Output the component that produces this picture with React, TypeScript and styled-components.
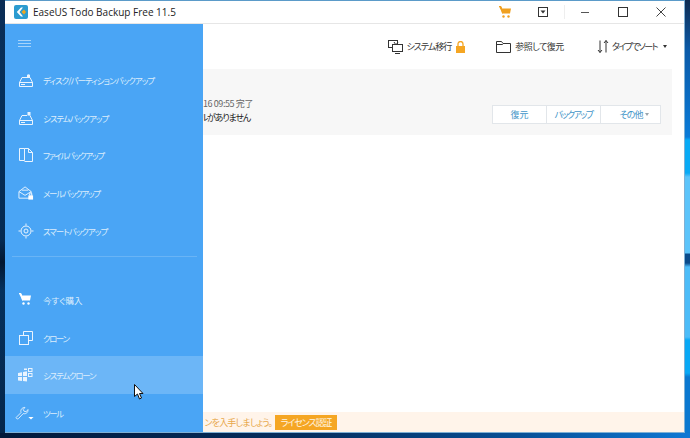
import React from "react";
import styled, { createGlobalStyle } from "styled-components";

const Global = createGlobalStyle`
  html, body { margin: 0; padding: 0; width: 690px; height: 438px; overflow: hidden; }
  * { box-sizing: border-box; }
`;
const FONT = `"Noto Sans CJK JP", "Noto Sans", sans-serif`;

const Desktop = styled.div`
  position: relative; width: 690px; height: 438px; overflow: hidden;
  padding: 0 5px 5px 5px;
  font-family: ${FONT}; font-feature-settings: "palt" 1;
  background:
    linear-gradient(180deg, #0f2c52 0, #0b5aa8 50px, #0a7bd8 137px, #08aaf5 140px, #08aaf5 173px,
      #5cc4fa 177px, #5cc4fa 253px, #0a4a8a 254px, #0a4a8a 263px, #4cbcf8 267px, #4cbcf8 337px,
      #08a8f5 340px, #08a8f5 373px, #0a78d0 377px, #0a78d0 100%) right top / 5px 433px no-repeat,
    linear-gradient(180deg, #0a2c55 0, #05305c 90px, #052a52 240px, #021630 262px, #05305c 290px, #04264c 433px) left top / 5px 433px no-repeat,
    linear-gradient(90deg, #02183a 0%, #052f60 45%, #074f96 75%, #0f78d4 100%);
`;
const Window = styled.div`
  width: 680px; height: 433px; display: flex; flex-direction: column;
  background: #fff; border-top: 1px solid #5b9bc9; border-right: 1px solid #7fb0d4; border-bottom: 1px solid #7fb0d4;
`;
const TitleBar = styled.header`
  flex: 0 0 22px; display: flex; align-items: center; padding: 0 4px 0 9px; background: #fff;
`;
const AppTitle = styled.span`
  margin-left: 5px; font: 10px/1 "Open Sans", sans-serif; color: #222; white-space: nowrap;
`;
const TitleTools = styled.div`
  margin-left: auto; display: flex; align-items: center; height: 100%;
`;
const TitleButton = styled.div`
  width: 38px; display: flex; align-items: center; justify-content: center;
`;
const ToolDivider = styled.i`
  width: 1px; height: 14px; background: #eee; margin: 0 1px 0 2px;
`;
const Body = styled.div`
  position: relative; flex: 1; display: flex; min-height: 0; border-top: 1px solid #e6e6e6;
`;
const Sidebar = styled.nav`
  flex: 0 0 198px; display: flex; flex-direction: column; background: #4aa5f5;
`;
const Burger = styled.div`
  height: 37px; display: flex; align-items: center; padding-left: 13px;
`;
const Row = styled.div<{ $active?: boolean; $track: number }>`
  height: 37.8px; display: flex; align-items: center; padding-left: 13px; gap: 9px;
  color: #dcedfc; font-size: 8.5px; white-space: nowrap; letter-spacing: ${p => p.$track}px;
  background: ${p => (p.$active ? "#6cb6f7" : "transparent")};
`;
const RowIcon = styled.span`
  width: 16px; height: 16px; display: flex; flex: none;
`;
const Rule = styled.hr`
  margin: 6px 6px 0 7px; border: 0; height: 1px; background: #69b4f6;
`;
const BottomGroup = styled.div`
  margin-top: auto; display: flex; flex-direction: column;
`;
const Main = styled.main`
  flex: 1; min-width: 0; display: flex; flex-direction: column;
`;
const Toolbar = styled.div`
  flex: 0 0 45px; display: flex; align-items: center; justify-content: flex-end; padding-right: 17px; gap: 30px;
`;
const ToolItem = styled.div<{ $lead?: number }>`
  display: flex; align-items: center; gap: 3px; color: #333; white-space: nowrap;
  margin-left: ${p => p.$lead ?? 0}px;
`;
const ToolLabel = styled.span<{ $track: number }>`
  font-size: 9px; letter-spacing: ${p => p.$track}px;
`;
const Card = styled.section`
  margin-right: 12px; height: 66px; background: #f7f7f7; display: flex; align-items: flex-end; padding: 0 11px 11px 0;
`;
const Lines = styled.div`
  width: 50px; overflow: hidden; display: flex; flex-direction: column; align-items: flex-end; gap: 1px; margin-right: auto;
`;
const LineGrey = styled.div`
  font-size: 9px; line-height: 13px; color: #666; white-space: nowrap; letter-spacing: -0.4px;
`;
const LineDark = styled.div`
  font-size: 9px; line-height: 13px; color: #222; white-space: nowrap; letter-spacing: -1.2px; margin-right: 3px;
`;
const ButtonGroup = styled.div`
  display: flex; height: 19px; border: 1px solid #e2e6ea; background: #fff;
`;
const GroupButton = styled.div<{ $w: number; $track: number; $pad?: number }>`
  width: ${p => p.$w}px; display: flex; align-items: center; justify-content: center; gap: 3px;
  padding-left: ${p => p.$pad ?? 0}px;
  font-size: 9px; color: #3f95c8; white-space: nowrap; letter-spacing: ${p => p.$track}px;
  & + & { border-left: 1px solid #e2e6ea; }
`;
const Caret = styled.i<{ $c: string }>`
  width: 0; height: 0; border-left: 2.5px solid transparent; border-right: 2.5px solid transparent;
  border-top: 3px solid ${p => p.$c}; display: block;
`;
const Notice = styled.div`
  margin-top: auto; height: 20px; background: #fff4ea; display: flex; align-items: center; overflow: hidden;
`;
const NoticeText = styled.div`
  width: 69px; margin-right: 3px; flex: none; overflow: hidden; display: flex; justify-content: flex-end;
  font-size: 9px; color: #e8a84a; white-space: nowrap; letter-spacing: -0.8px;
`;
const LicenseButton = styled.div`
  width: 62px; height: 15px; background: #f5a623; color: #fff6e5; font-size: 9px; letter-spacing: -1.1px;
  display: flex; align-items: center; justify-content: center; white-space: nowrap;
`;
const Cursor = styled.svg`
  position: absolute; left: 134px; top: 384px; width: 10px; height: 16px;
`;

const S = { fill: "none", stroke: "#eaf4fe", strokeWidth: 1 } as const;
const K = { fill: "none", stroke: "#333", strokeWidth: 1 } as const;

const DiskIcon = ({ badge }: { badge?: boolean }) => (
  <svg width="16" height="16" viewBox="0 0 16 16">
    <path d="M1.500 10.500 4 5.500h5M12 5.500l2.500 5M1.500 10.500v4h13v-4z" {...S} />
    <path d="M1.500 10.500h13M3 12.500h4" {...S} />
    {badge
      ? <path d="M9 6V3a2 2 0 0 1 3 0v3z" fill="#eaf4fe" />
      : <path d="M9.500 5.500V2h3v3.500z" fill="#eaf4fe" />}
  </svg>
);
const FileIcon = () => (
  <svg width="16" height="16" viewBox="0 0 16 16">
    <path d="M1.500 1.500h5v12h-5zM6.500 1.500l4 0 4 4v9h-8M10.500 1.500v4h4" {...S} />
  </svg>
);
const MailIcon = () => (
  <svg width="16" height="16" viewBox="0 0 17 16">
    <path d="M1 6.500 7.500 1.500 14 6.500v7H1zM1 6.500l6.500 4 6.500-4M4 5h7" {...S} />
    <rect x="11" y="10.500" width="5" height="4.500" fill="#fff" />
    <path d="M12.300 10.500V9a1.200 1.200 0 0 1 2.400 0v1.500" {...S} />
  </svg>
);
const SmartIcon = () => (
  <svg width="16" height="16" viewBox="0 0 16 16">
    <circle cx="8" cy="8" r="5" {...S} />
    <circle cx="8" cy="8" r="2" {...S} />
    <path d="M8 0.500v2M8 13.500v2M0.500 8h2M13.500 8h2" {...S} />
  </svg>
);
const CartIcon = ({ c }: { c: string }) => (
  <svg width="14" height="14" viewBox="0 0 14 14">
    <path d="M1 1.500h2l1.200 2H13l-1 5H4.500z" fill={c} />
    <path d="M1 1.500h2l1.500 7" fill="none" stroke={c} />
    <circle cx="5.500" cy="11.500" r="1.200" fill={c} />
    <circle cx="10.500" cy="11.500" r="1.200" fill={c} />
  </svg>
);
const CloneIcon = () => (
  <svg width="16" height="16" viewBox="0 0 16 16">
    <rect x="1.500" y="5.500" width="9" height="9" {...S} />
    <path d="M5.500 5.500v-4h9v9h-4" {...S} />
  </svg>
);
const WinIcon = () => (
  <svg width="16" height="16" viewBox="0 0 16 16">
    <path d="M0 6l4-.8V9H0zM5 5l4-.8V9H5zM0 10h4v4l-4-.6zM5 10h4v4.600l-4-.5z" fill="#eaf4fe" />
    <rect x="10.500" y="1.500" width="3.500" height="3" {...S} />
    <rect x="10.500" y="6.500" width="3.500" height="3" {...S} />
    <rect x="6" y="1.500" width="3" height="1.500" fill="#eaf4fe" />
  </svg>
);
const WrenchIcon = () => (
  <svg width="22" height="16" viewBox="0 0 22 16" style={{ marginLeft: -3 }}>
    <path d="M1.500 13 7 7.500C6 4.500 8 1.500 11.500 1.500L9.500 4l1 2 2.500.5L15 4c.5 3-2 5.500-5.500 4.700L4 14.500c-1 1-3.500-.5-2.500-1.500z" {...S} />
    <path d="M15.500 12.500h6l-3 3z" fill="#fff" />
  </svg>
);

const items = [
  { label: "ディスク/パーティションバックアップ", icon: <DiskIcon badge />, track: -1 },
  { label: "システムバックアップ", icon: <DiskIcon />, track: -1.05 },
  { label: "ファイルバックアップ", icon: <FileIcon />, track: -1.35 },
  { label: "メールバックアップ", icon: <MailIcon />, track: -1.3 },
  { label: "スマートバックアップ", icon: <SmartIcon />, track: -1.05 },
];

export default function App() {
  return (
    <Desktop>
      <Global />
      <Window>
        <TitleBar>
          <svg width="14" height="14" viewBox="0 0 14 14">
            <rect width="14" height="14" rx="2" fill="#2b9bd0" />
            <path d="M7 2.500 2.800 7 7 11.500h2L5.500 7 9 2.500z" fill="#fff" />
            <path d="M7.500 7 10 4.500 12 7l-2 2.500z" fill="#f0a51e" />
          </svg>
          <AppTitle>EaseUS Todo Backup Free 11.5</AppTitle>
          <TitleTools>
            <TitleButton><CartIcon c="#f0a020" /></TitleButton>
            <TitleButton>
              <svg width="10" height="10" viewBox="0 0 10 10">
                <rect x=".5" y=".5" width="9" height="9" {...K} />
                <path d="M2.500 3.500h5L5 6.500z" fill="#333" />
              </svg>
            </TitleButton>
            <ToolDivider />
            <TitleButton>
              <svg width="10" height="10" viewBox="0 0 10 10"><path d="M1 5.500h8" stroke="#555" /></svg>
            </TitleButton>
            <TitleButton>
              <svg width="10" height="10" viewBox="0 0 10 10"><rect x=".5" y=".5" width="9" height="9" {...K} /></svg>
            </TitleButton>
            <TitleButton>
              <svg width="10" height="10" viewBox="0 0 10 10"><path d="M.5.500l9 9M9.500.500l-9 9" stroke="#444" /></svg>
            </TitleButton>
          </TitleTools>
        </TitleBar>
        <Body>
          <Sidebar>
            <Burger>
              <svg width="14" height="10" viewBox="0 0 14 10"><path d="M0 2.500h13M0 5.500h13M0 8.500h13" stroke="#a8d4fa" /></svg>
            </Burger>
            {items.map(it => (
              <Row key={it.label} $track={it.track}><RowIcon>{it.icon}</RowIcon>{it.label}</Row>
            ))}
            <Rule />
            <BottomGroup>
              <Row $track={0}><RowIcon><CartIcon c="#fff" /></RowIcon>今すぐ購入</Row>
              <Row $track={-1.5}><RowIcon><CloneIcon /></RowIcon>クローン</Row>
              <Row $active $track={-1.25}><RowIcon><WinIcon /></RowIcon>システムクローン</Row>
              <Row $track={-1.5}><RowIcon><WrenchIcon /></RowIcon>ツール</Row>
            </BottomGroup>
          </Sidebar>
          <Main>
            <Toolbar>
              <ToolItem>
                <svg width="15" height="15" viewBox="0 0 15 15">
                  <rect x=".5" y="1.500" width="9" height="7" {...K} />
                  <rect x="4.500" y="5.500" width="10" height="7" fill="#fff" stroke="#333" />
                  <path d="M7 14.500h5M6 3l2 3 2-3" {...K} />
                </svg>
                <ToolLabel $track={-1}>システム移行</ToolLabel>
                <svg width="11" height="12" viewBox="0 0 11 12" style={{ marginLeft: 1 }}>
                  <rect x="1" y="5" width="9" height="7" fill="#f5a623" />
                  <path d="M3 5V3a2.500 2.500 0 0 1 5 0v2" fill="none" stroke="#f5a623" strokeWidth="1.300" />
                </svg>
              </ToolItem>
              <ToolItem>
                <svg width="15" height="13" viewBox="0 0 15 13" style={{ marginRight: 1 }}>
                  <path d="M.5 12.500V1.500h5l1.500 2h7.500v9zM.5 4.500h6l1-1" {...K} />
                </svg>
                <ToolLabel $track={-0.5}>参照して復元</ToolLabel>
              </ToolItem>
              <ToolItem $lead={3}>
                <svg width="12" height="13" viewBox="0 0 12 13">
                  <path d="M3 .5v12M1 10l2 2.500L5 10M9 12.500V.500M7 3l2-2.500L11 3" {...K} />
                </svg>
                <ToolLabel $track={-1.5}>タイプでソート</ToolLabel>
                <span style={{ width: 0 }} />
                <Caret $c="#333" />
              </ToolItem>
            </Toolbar>
            <Card>
              <Lines>
                <LineGrey>16 09:55 完了</LineGrey>
                <LineDark>ルがありません</LineDark>
              </Lines>
              <ButtonGroup>
                <GroupButton $w={53} $track={0}>復元</GroupButton>
                <GroupButton $w={54} $track={-1.6}>バックアップ</GroupButton>
                <GroupButton $w={60} $track={-1} $pad={8}>その他<Caret $c="#9aa5ad" /></GroupButton>
              </ButtonGroup>
            </Card>
            <Notice>
              <NoticeText>ンを入手しましょう。</NoticeText>
              <LicenseButton>ライセンス認証</LicenseButton>
            </Notice>
          </Main>
        </Body>
      </Window>
      <Cursor viewBox="0 0 10 16">
        <path d="M.5.500v12l3-2.500 2 5 2-1-2-4.500H9z" fill="#fff" stroke="#111" strokeWidth="1" />
      </Cursor>
    </Desktop>
  );
}
